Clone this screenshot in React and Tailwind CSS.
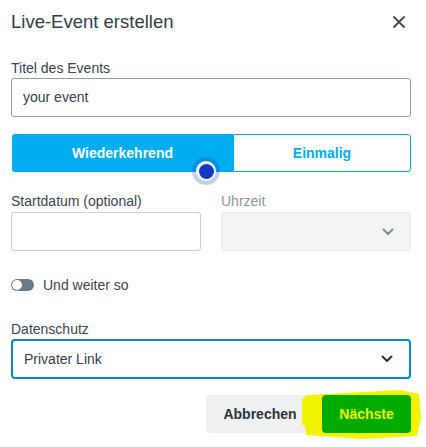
import React from "react";

function Chevron({ className }) {
  return (
    <svg width="12" height="8" viewBox="0 0 12 8" className={className} fill="none">
      <path d="M1.5 1.5 L6 6 L10.5 1.5" stroke="currentColor" strokeWidth="2" strokeLinecap="round" strokeLinejoin="round" />
    </svg>
  );
}

export default function App() {
  return (
    <div className="w-[426px] h-[447px] bg-white relative overflow-hidden" style={{ fontFamily: '"Liberation Sans", Arial, sans-serif' }}>
      <div className="pl-[11px] pr-[15px]">
        <div className="flex items-center justify-between pt-[9px] h-[44px] pb-[9px]">
          <span className="text-[18.5px] leading-[24px] text-[#333d47]">Live-Event erstellen</span>
          <svg width="12" height="12" viewBox="0 0 12 12" className="mr-[6px] text-[#3a4852]">
            <path d="M1 1 L11 11 M11 1 L1 11" stroke="currentColor" strokeWidth="1.8" strokeLinecap="round" />
          </svg>
        </div>
        <div className="mt-[16px] text-[14px] leading-[16px] text-[#3a4550]">Titel des Events</div>
        <div className="mt-[2px] h-[39px] border border-[#8f9aa3] rounded-[3px] flex items-center px-[11px] text-[14px] text-[#36404a]">your event</div>

        <div className="relative mt-[17px] h-[38px] flex ml-[1px]">
          <div className="w-[221px] bg-[#00adee] rounded-l-[3px] flex items-center justify-center text-white font-bold text-[14px]">Wiederkehrend</div>
          <div className="flex-1 border border-[#00adee] bg-white rounded-r-[3px] flex items-center justify-center text-[#00adee] font-bold text-[14px]">Einmalig</div>
          <div className="absolute left-[180px] top-[23px] w-[28px] h-[28px] rounded-full bg-[rgba(25,60,205,0.25)] flex items-center justify-center">
            <div className="w-[20px] h-[20px] rounded-full bg-white flex items-center justify-center">
              <div className="w-[15px] h-[15px] rounded-full bg-[#1438c6]"></div>
            </div>
          </div>
        </div>

        <div className="mt-[21px] flex gap-[20px]">
          <div className="flex-1">
            <div className="text-[14px] leading-[16px] text-[#3a4550]">Startdatum (optional)</div>
            <div className="mt-[3px] h-[39px] border border-[#c9ced3] rounded-[3px] bg-white"></div>
          </div>
          <div className="flex-1">
            <div className="text-[14px] leading-[16px] text-[#8a96a0]">Uhrzeit</div>
            <div className="mt-[3px] h-[39px] border border-[#e6e9ec] rounded-[3px] bg-[#f2f4f6] flex items-center justify-end pr-[16px]">
              <Chevron className="text-[#7f8c96]" />
            </div>
          </div>
        </div>

        <div className="mt-[26px] flex items-center gap-[9px]">
          <div className="w-[23px] h-[12px] rounded-full bg-[#6b7a85] flex items-center pl-[1px]">
            <div className="w-[10px] h-[10px] rounded-full bg-white"></div>
          </div>
          <span className="text-[14px] leading-[16px] text-[#3a4550]">Und weiter so</span>
        </div>

        <div className="mt-[28px] text-[14px] leading-[16px] text-[#3a4550]">Datenschutz</div>
        <div className="mt-[2px] h-[40px] border-2 border-[#0a86cc] rounded-[4px] flex items-center justify-between pl-[11px] pr-[16px]">
          <span className="text-[14px] text-[#36404a]">Privater Link</span>
          <Chevron className="text-[#26323c]" />
        </div>

        <div className="mt-[16px] flex justify-end gap-[8px] relative">
          <div className="w-[108px] h-[38px] rounded-[4px] bg-[#eef0f2] flex items-center justify-center text-[14px] font-bold text-[#2b3440]">Abbrechen</div>
          <div className="relative w-[89px] h-[38px]">
            <svg className="absolute left-[-20px] top-[-7px]" width="122" height="52" viewBox="0 0 122 52">
              <path d="M5 7 L98 2 L117 6 L119 30 L115 48 L60 51 L4 47 L3 38 L-1 36 L-1 12 Z" fill="#f3f300" />
              <path d="M0 13 L18 10 L18 36 L0 36 Z" fill="#f3f300" />
            </svg>
            <div className="relative w-[89px] h-[38px] rounded-[4px] bg-[#00ab00] flex items-center justify-center text-[14px] font-bold text-[#f0f000]">Nächste</div>
          </div>
        </div>
      </div>
    </div>
  );
}
